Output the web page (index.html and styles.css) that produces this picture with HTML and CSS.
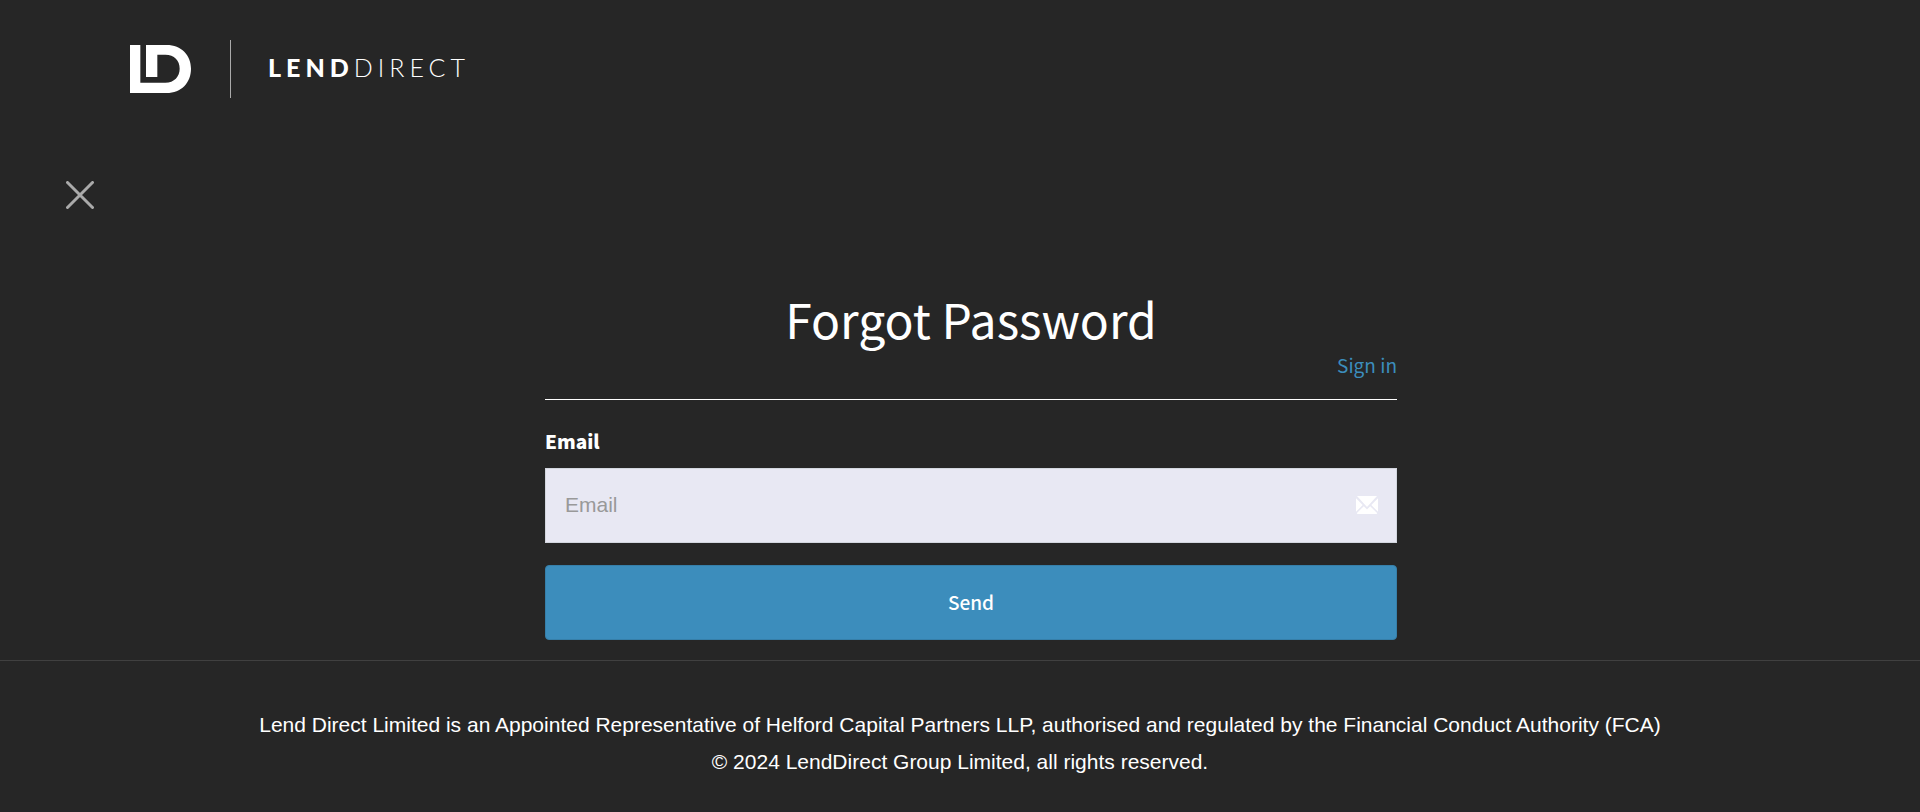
FILE: index.html
```html
<!DOCTYPE html>
<html lang="en">
<head>
<meta charset="utf-8">
<meta name="viewport" content="width=device-width, initial-scale=1">
<title>Forgot Password - LendDirect</title>
<link rel="stylesheet" href="styles.css">
</head>
<body>
<header class="header">
  <a class="brand" href="#" aria-label="LendDirect home">
    <svg class="brand-mark" viewBox="60 45 183 144" aria-hidden="true">
      <path fill="#fff" d="M60 45H91V158H166C193 158 209 139 209 116C209 91 193 74 166 74H142V141H108V45H170C214 45 243 76 243 116C243 158 214 189 170 189H60Z"/>
    </svg>
    <span class="brand-divider"></span>
    <span class="brand-name"><strong class="brand-bold">LEND</strong><span class="brand-light">DIRECT</span></span>
  </a>
</header>
<main class="main">
  <a class="close" href="#" aria-label="Close">
    <svg class="close-icon" viewBox="0 0 28 28" aria-hidden="true">
      <path d="M1.5 1.5L26.5 26.5M26.5 1.5L1.5 26.5" fill="none" stroke="#aaa" stroke-width="3" stroke-linecap="round"/>
    </svg>
  </a>
  <form class="form">
    <h1 class="title">Forgot Password</h1>
    <div class="links"><a class="link" href="#">Sign in</a></div>
    <label class="label" for="email">Email</label>
    <div class="field">
      <input class="input" id="email" type="email" placeholder="Email">
      <svg class="field-icon" viewBox="0 0 22 18" aria-hidden="true">
        <path fill="#fff" d="M1 0H21L11 11ZM0 2.2L6.7 9L0 15.8ZM22 2.2V15.8L15.3 9ZM7.8 10.2L11 13.5L14.2 10.2L21.3 17.2Q21 18 20 18H2Q1 18 .7 17.2Z"/>
      </svg>
    </div>
    <button class="button" type="submit">Send</button>
  </form>
</main>
<footer class="footer">
  <p class="footer-line">Lend Direct Limited is an Appointed Representative of Helford Capital Partners LLP, authorised and regulated by the Financial Conduct Authority (FCA)</p>
  <p class="footer-line">© 2024 LendDirect Group Limited, all rights reserved.</p>
</footer>
</body>
</html>
```
FILE: styles.css
```css
* { box-sizing: border-box; }

body {
  margin: 0;
  min-height: 100vh;
  display: flex;
  flex-direction: column;
  background: #262626;
  color: #fff;
  font-family: "Noto Sans CJK SC", "Noto Sans", sans-serif;
  font-size: 19px;
}

.header { padding: 40px 130px 0; }

.brand {
  display: inline-flex;
  align-items: center;
  color: #fff;
  text-decoration: none;
}
.brand-mark { width: 61px; height: 48px; }
.brand-divider {
  width: 1px;
  height: 58px;
  margin: 0 37px 0 39px;
  background: #aaa;
}
.brand-name {
  padding-bottom: 4px;
  font-family: Lato, sans-serif;
  font-size: 25px;
  line-height: 30px;
  letter-spacing: 5px;
}
.brand-bold { font-weight: 900; }
.brand-light { font-weight: 300; }

.main { padding: 83px 66px 20px; }

.close { display: block; width: 28px; height: 28px; }
.close-icon { display: block; width: 28px; height: 28px; }

.form {
  width: 100%;
  max-width: 852px;
  margin: 74px auto 0;
  translate: 11px;
}
.title {
  margin: 0;
  font-size: 48px;
  font-weight: 400;
  line-height: 70px;
  text-align: center;
}
.links {
  padding-bottom: 22px;
  border-bottom: 1px solid #fff;
  text-align: right;
  line-height: 24px;
}
.link { color: #3c8dbc; text-decoration: none; }
.label {
  display: block;
  margin: 29px 0 15px;
  font-weight: 900;
  line-height: 24px;
}
.field { position: relative; }
.input {
  display: block;
  width: 100%;
  height: 75px;
  padding: 0 60px 2px 19px;
  border: 1px solid #d2d6de;
  border-radius: 0;
  background: #e8e8f3;
  color: #333;
  font-family: "Liberation Sans", Arial, sans-serif;
  font-size: 21px;
}
.input::placeholder { color: #999; opacity: 1; }
.field-icon {
  position: absolute;
  top: 28px;
  right: 19px;
  width: 22px;
  height: 18px;
}
.button {
  display: block;
  width: 100%;
  height: 75px;
  margin-top: 22px;
  padding: 0 16px 2px;
  border: 1px solid #367fa9;
  border-radius: 4px;
  background: #3c8dbc;
  color: #fff;
  font-family: inherit;
  font-size: 19px;
  font-weight: 500;
}

.footer {
  flex: 1;
  padding: 45px 20px 30px;
  border-top: 1px solid #404040;
  text-align: center;
  font-family: "Liberation Sans", Arial, sans-serif;
  font-size: 21px;
  line-height: 37px;
}
.footer-line { margin: 0; }
```
